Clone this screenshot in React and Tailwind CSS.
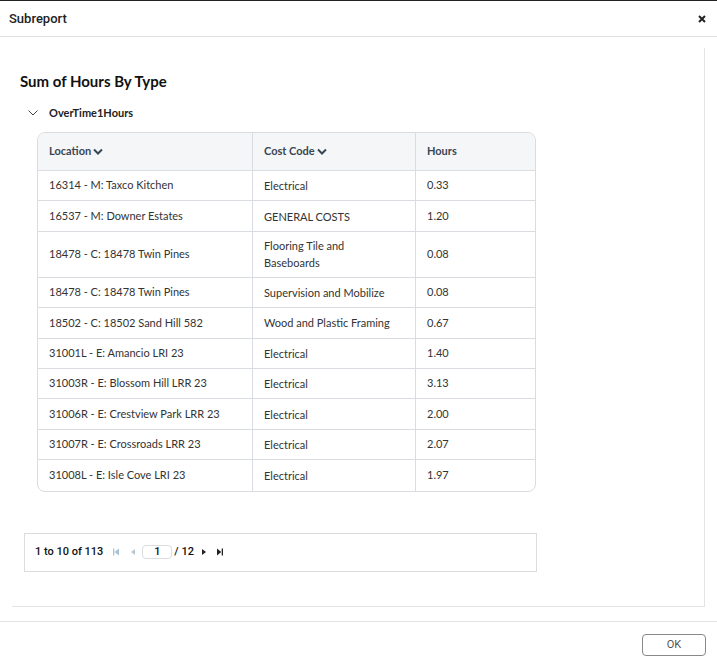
const rows = [
  ['16314 - M: Taxco Kitchen', 'Electrical', '0.33'],
  ['16537 - M: Downer Estates', 'GENERAL COSTS', '1.20'],
  ['18478 - C: 18478 Twin Pines', 'Flooring Tile and Baseboards', '0.08'],
  ['18478 - C: 18478 Twin Pines', 'Supervision and Mobilize', '0.08'],
  ['18502 - C: 18502 Sand Hill 582', 'Wood and Plastic Framing', '0.67'],
  ['31001L - E: Amancio LRI 23', 'Electrical', '1.40'],
  ['31003R - E: Blossom Hill LRR 23', 'Electrical', '3.13'],
  ['31006R - E: Crestview Park LRR 23', 'Electrical', '2.00'],
  ['31007R - E: Crossroads LRR 23', 'Electrical', '2.07'],
  ['31008L - E: Isle Cove LRI 23', 'Electrical', '1.97'],
]

const SortIcon = () => (
  <svg width="10" height="8" viewBox="0 0 10 8" className="ml-[2px]">
    <path d="M1 1.5 L5 5.5 L9 1.5" fill="none" stroke="#3b4654" strokeWidth="2" />
  </svg>
)

const App = () => {
  return (
    <div className="flex flex-col h-[668px] w-[717px] bg-white border-t border-[#222] font-['Lato',sans-serif]">
      <div className="flex items-center justify-between h-[36px] px-[9px] border-b border-[#e2e2e2] font-['Roboto',sans-serif]">
        <span className="text-[13px] font-medium text-[#222]">Subreport</span>
        <svg width="8" height="8" viewBox="0 0 8 8" className="mr-[2px]">
          <path d="M1 1 L7 7 M7 1 L1 7" stroke="#222" strokeWidth="2" />
        </svg>
      </div>

      <div className="flex-1 px-3 pt-[11px]">
        <div className="h-[559px] border-r border-b border-[#e4e4e4] pt-[23px]">
          <h1 className="ml-2 text-[15px] leading-5 font-bold text-[#111]">Sum of Hours By Type</h1>

          <div className="flex items-center mt-[12px] ml-[16px] h-5">
            <svg width="10" height="6" viewBox="0 0 10 6">
              <path d="M0.5 0.5 L5 5 L9.5 0.5" fill="none" stroke="#444" strokeWidth="1" />
            </svg>
            <span className="ml-[11px] text-[11px] font-bold text-[#222]">OverTime1Hours</span>
          </div>

          <div className="ml-[25px] mt-[9px] w-[499px] border border-[#d9dce0] rounded-lg overflow-hidden">
            <div className="grid grid-cols-[215px_163px_1fr] h-[38px] bg-[#f5f6f7] border-b border-[#d9dce0] text-[11px] font-bold text-[#3b4654]">
              <div className="flex items-center px-[11px] border-r border-[#d9dce0]">Location<SortIcon /></div>
              <div className="flex items-center px-[11px] border-r border-[#d9dce0]">Cost Code<SortIcon /></div>
              <div className="flex items-center px-[11px]">Hours</div>
            </div>
            {rows.map((r, i) => (
              <div
                key={i}
                className={`grid grid-cols-[215px_163px_1fr] text-[11px] text-[#333] ${i < rows.length - 1 ? 'border-b border-[#d9dce0]' : ''} ${r[1].length > 26 ? 'h-[46px]' : 'h-[30.4px]'}`}
              >
                <div className="flex items-center px-[11px] border-r border-[#d9dce0]">{r[0]}</div>
                <div className="flex items-center pl-[11px] pr-[22px] border-r border-[#d9dce0] leading-[17px]">{r[1]}</div>
                <div className="flex items-center px-[11px]">{r[2]}</div>
              </div>
            ))}
          </div>

          <div className="ml-3 mt-[41px] w-[513px] h-[39px] border border-[#dcdcdc] flex items-center px-[10px] font-['Roboto',sans-serif] text-[11px] text-[#111]">
            <span className="font-medium">1 to 10 of 113</span>
            <svg width="7" height="8" viewBox="0 0 7 8" className="ml-[10px]">
              <rect x="0" y="0.5" width="1.3" height="7" fill="#a9c1d6" />
              <path d="M6 0.5 L1.5 4 L6 7.5 Z" fill="#a9c1d6" />
            </svg>
            <svg width="4" height="6" viewBox="0 0 4 6" className="ml-[11px]">
              <path d="M4 0 L0 3 L4 6 Z" fill="#b8c6d2" />
            </svg>
            <div className="ml-[7px] w-[30px] h-[14px] border border-[#dcdcdc] rounded-[4px] flex items-center justify-center font-medium">1</div>
            <span className="ml-[2px] font-medium">/ 12</span>
            <svg width="4" height="6" viewBox="0 0 4 6" className="ml-[8px]">
              <path d="M0 0 L4 3 L0 6 Z" fill="#222" />
            </svg>
            <svg width="6" height="8" viewBox="0 0 6 8" className="ml-[11px]">
              <path d="M0 0.5 L4.3 4 L0 7.5 Z" fill="#222" />
              <rect x="4.7" y="0.5" width="1.3" height="7" fill="#222" />
            </svg>
          </div>
        </div>
      </div>

      <div className="h-[47px] border-t border-[#e2e2e2] flex items-center justify-end pr-[11px]">
        <button className="w-[64px] h-[22px] border border-[#888] rounded-[4px] text-[11px] text-[#555] font-['Roboto',sans-serif]">OK</button>
      </div>
    </div>
  )
}

export default App
